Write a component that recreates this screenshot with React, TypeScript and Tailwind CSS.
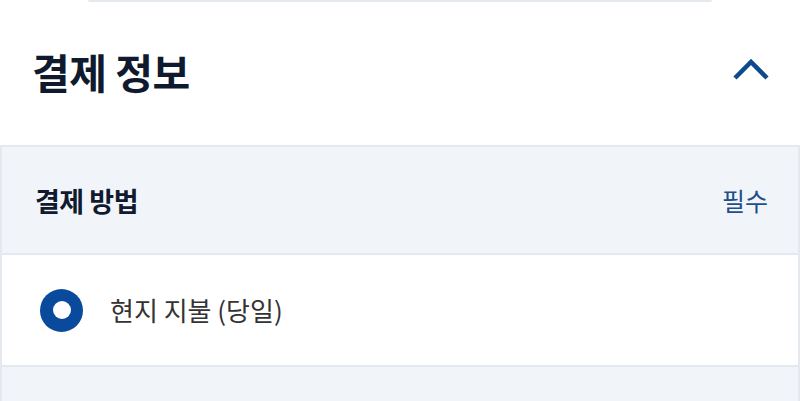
import React from 'react';

const font = { fontFamily: '"Noto Sans CJK KR", "Noto Sans", sans-serif' };

export default function App() {
  return (
    <div className="w-full h-[401px] bg-white overflow-hidden" style={font}>
      {/* bottom edge of previous card */}
      <div className="mx-[88px] h-[2px] bg-[#e4e9f0] rounded-b" />

      {/* Section title */}
      <div className="flex items-center justify-between h-[143px] pl-[32px] pr-[30px]">
        <h2 className="text-[41px] font-bold text-[#101a2e] leading-none mt-[-4px] tracking-[-0.5px]">결제 정보</h2>
        <svg width="38" height="24" viewBox="0 0 38 24" fill="none" className="mt-[-10px]">
          <polyline
            points="3,21 19,5 35,21"
            stroke="#0b4a8e"
            strokeWidth="4.5"
            strokeLinecap="butt"
            strokeLinejoin="miter"
          />
        </svg>
      </div>

      <div className="border-x-2 border-t-2 border-[#e4e9f0]">
        {/* Payment method header */}
        <div className="flex items-center justify-between h-[108px] bg-[#f1f5f9] border-b-2 border-[#e4e9f0] pl-[33px] pr-[30px]">
          <span className="text-[27px] font-bold text-[#111a2e] leading-none tracking-[-0.5px]">결제 방법</span>
          <span className="text-[25px] text-[#1d4f8c] leading-none">필수</span>
        </div>

        {/* Option */}
        <div className="flex items-center gap-[27px] h-[112px] bg-white border-b-2 border-[#e4e9f0] pl-[38px]">
          <div className="w-[43px] h-[43px] rounded-full bg-[#0a4a9c] flex items-center justify-center">
            <div className="w-[18px] h-[18px] rounded-full bg-white" />
          </div>
          <span className="text-[26px] text-[#333333] leading-none">현지 지불 (당일)</span>
        </div>

        <div className="h-[40px] bg-[#f1f5f9]" />
      </div>
    </div>
  );
}
